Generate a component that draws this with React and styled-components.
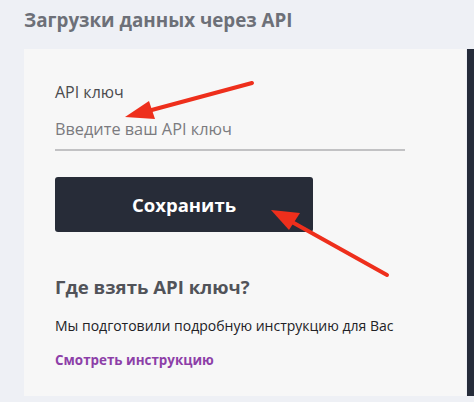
import styled, { createGlobalStyle } from "styled-components";

const GlobalStyle = createGlobalStyle`
    html, body {
        margin: 0;
        padding: 0;
        background-color: #eef0f5;
        font-family: "Open Sans", "Noto Sans", sans-serif;
        overflow: hidden;
    }
`;

function Arrows() {
    // red annotation arrows drawn on top of the form
    return (
        <Overlay width="474" height="402" viewBox="0 0 474 402">
            <line x1="252" y1="83" x2="148" y2="111" stroke="#ee2f1c" strokeWidth="4" strokeLinecap="round" />
            <polygon points="125,117 149,101 155,119" fill="#ee2f1c" />
            <line x1="387" y1="275" x2="292" y2="222" stroke="#ee2f1c" strokeWidth="4" strokeLinecap="round" />
            <polygon points="271,210 300,213 289,230" fill="#ee2f1c" />
        </Overlay>
    );
}

function App() {
    return (
        <Page>
            <GlobalStyle />
            <Title>Загрузки данных через API</Title>
            <Row>
                <Card>
                    <Label>API ключ</Label>
                    <Input placeholder="Введите ваш API ключ" />
                    <SaveButton>Сохранить</SaveButton>
                    <Heading>Где взять API ключ?</Heading>
                    <Text>Мы подготовили подробную инструкцию для Вас</Text>
                    <Link href="#">Смотреть инструкцию</Link>
                </Card>
                <SideStrip />
            </Row>
            <Arrows />
        </Page>
    );
}
export default App;

const Page = styled.div`
    position: relative;
    width: 474px;
    height: 402px;
    overflow: hidden;
`;

const Title = styled.h1`
    margin: 0;
    padding: 5px 0 0 24px;
    height: 49px;
    box-sizing: border-box;
    font-size: 18.8px;
    font-weight: 700;
    line-height: 30px;
    color: #6d7078;
`;

const Row = styled.div`
    display: flex;
    gap: 1px;
    height: 347px;
`;

const Card = styled.div`
    width: 442px;
    margin-left: 24px;
    box-sizing: border-box;
    padding: 31px 0 0 31px;
    background-color: #f7f7f7;
    display: flex;
    flex-direction: column;
    align-items: flex-start;
`;

const SideStrip = styled.div`
    flex: 1;
    background-color: #262c3a;
`;

const Label = styled.div`
    font-size: 16px;
    line-height: 24px;
    color: #4b4b4e;
`;

const Input = styled.input`
    width: 350px;
    height: 42px;
    box-sizing: border-box;
    margin-top: 5px;
    padding: 0;
    border: none;
    border-bottom: 2px solid #c2c2c4;
    background: transparent;
    font-family: inherit;
    font-size: 16.3px;
    outline: none;

    &::placeholder {
        color: #7b7b7f;
    }
`;

const SaveButton = styled.button`
    margin-top: 26px;
    width: 258px;
    height: 55px;
    border: none;
    border-radius: 3px;
    background-color: #272c38;
    color: #ffffff;
    font-family: inherit;
    font-size: 18.5px;
    font-weight: 700;
    cursor: pointer;
`;

const Heading = styled.h2`
    margin: 42px 0 0 0;
    font-size: 18.6px;
    font-weight: 700;
    line-height: 26px;
    color: #515359;
`;

const Text = styled.p`
    margin: 16px 0 0 0;
    font-size: 14px;
    line-height: 20px;
    color: #222226;
`;

const Link = styled.a`
    margin-top: 14px;
    font-size: 13.4px;
    font-weight: 700;
    line-height: 20px;
    color: #8d3fa8;
    text-decoration: none;
`;

const Overlay = styled.svg`
    position: absolute;
    top: 0;
    left: 0;
    pointer-events: none;
`;
